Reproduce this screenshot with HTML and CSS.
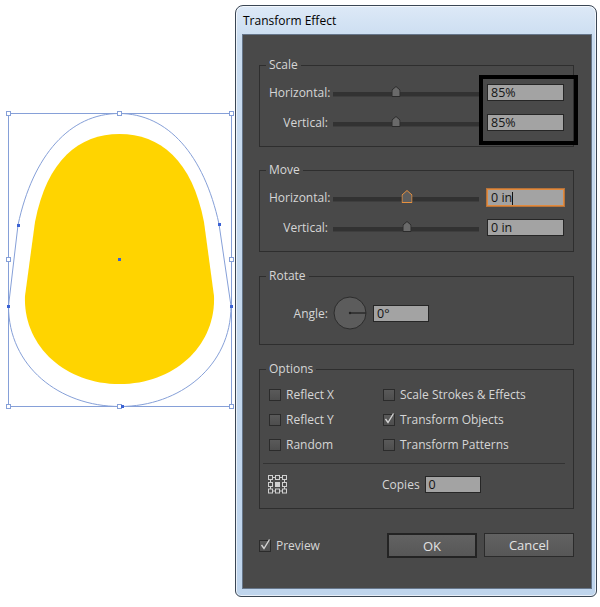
FILE: index.html
```html
<!DOCTYPE html>
<html>
<head>
<meta charset="utf-8">
<link rel="stylesheet" href="styles.css">
</head>
<body>
<svg class="canvas" width="235" height="607" viewBox="0 0 235 607">
  <path class="blob" d="M119.5,134 C160,134 192,160 204,222 L214,296 C216,345 175,384 119.5,384 C64,384 23,345 25,296 L35,222 C47,160 79,134 119.5,134 Z"/>
  <rect class="bbox" x="8.5" y="113.5" width="223" height="293"/>
  <path class="outline" d="M119,113.5 C168,113.5 204,155 219,224 L231,306 C231,366 180,406.5 120,406.5 C59,406.5 8.5,366 8.5,306 L18,225 C33,155 70,113.5 119,113.5 Z"/>
  <g class="handle">
    <rect x="6.5" y="111.5" width="4" height="4"/>
    <rect x="117.5" y="111.5" width="4" height="4"/>
    <rect x="229.5" y="111.5" width="4" height="4"/>
    <rect x="6.5" y="257.5" width="4" height="4"/>
    <rect x="229.5" y="257.5" width="4" height="4"/>
    <rect x="6.5" y="404.5" width="4" height="4"/>
    <rect x="117.5" y="404.5" width="4" height="4"/>
    <rect x="229.5" y="404.5" width="4" height="4"/>
  </g>
  <g class="anchor">
    <rect x="17" y="224" width="3" height="3"/>
    <rect x="218" y="223" width="3" height="3"/>
    <rect x="7" y="305" width="3" height="3"/>
    <rect x="230" y="305" width="3" height="3"/>
    <rect x="118" y="258" width="3" height="3"/>
    <rect x="121" y="405" width="3" height="3"/>
  </g>
</svg>

<div class="window">
  <div class="titlebar">Transform Effect</div>
  <div class="panel">
    <fieldset class="group scale">
      <legend>Scale</legend>
      <div class="row">
        <span class="label">Horizontal:</span>
        <div class="slider"><svg class="thumb" style="left:43%" width="9" height="11" viewBox="0 0 9 11"><path d="M0.5,10.5 V4 L4.5,0.5 L8.5,4 V10.5 Z"/></svg></div>
        <div class="field">85%</div>
      </div>
      <div class="row">
        <span class="label">Vertical:</span>
        <div class="slider"><svg class="thumb" style="left:43%" width="9" height="11" viewBox="0 0 9 11"><path d="M0.5,10.5 V4 L4.5,0.5 L8.5,4 V10.5 Z"/></svg></div>
        <div class="field">85%</div>
      </div>
    </fieldset>

    <fieldset class="group move">
      <legend>Move</legend>
      <div class="row">
        <span class="label">Horizontal:</span>
        <div class="slider"><svg class="thumb active" style="left:50.5%" width="11" height="13" viewBox="0 0 11 13"><path d="M0.5,12.5 V5 L5.5,0.5 L10.5,5 V12.5 Z"/></svg></div>
        <div class="field focus">0 in<span class="caret"></span></div>
      </div>
      <div class="row">
        <span class="label">Vertical:</span>
        <div class="slider"><svg class="thumb" style="left:50.5%" width="9" height="11" viewBox="0 0 9 11"><path d="M0.5,10.5 V4 L4.5,0.5 L8.5,4 V10.5 Z"/></svg></div>
        <div class="field">0 in</div>
      </div>
    </fieldset>

    <fieldset class="group rotate">
      <legend>Rotate</legend>
      <div class="row dial-row">
        <span class="label">Angle:</span>
        <svg class="dial" width="34" height="34" viewBox="0 0 34 34">
          <circle cx="17" cy="17" r="16" class="dial-face"/>
          <line x1="17" y1="17" x2="33" y2="17" class="dial-hand"/>
          <circle cx="17" cy="17" r="1.2" class="dial-dot"/>
        </svg>
        <div class="field angle">0°</div>
      </div>
    </fieldset>

    <fieldset class="group options">
      <legend>Options</legend>
      <div class="checks">
        <label class="check"><span class="box"></span>Reflect X</label>
        <label class="check"><span class="box"></span>Scale Strokes &amp; Effects</label>
        <label class="check"><span class="box"></span>Reflect Y</label>
        <label class="check"><span class="box"><svg width="12" height="12" viewBox="0 0 12 12"><path d="M2.5,6 L5,9.5 L10.5,0.5"/></svg></span>Transform Objects</label>
        <label class="check"><span class="box"></span>Random</label>
        <label class="check"><span class="box"></span>Transform Patterns</label>
      </div>
      <div class="separator"></div>
      <div class="copies-row">
        <svg class="locator" width="20" height="19" viewBox="0 0 20 19">
          <g class="loc-sq">
            <rect x="0.5" y="0.5" width="4" height="4"/>
            <rect x="7.5" y="0.5" width="4" height="4"/>
            <rect x="14.5" y="0.5" width="4" height="4"/>
            <rect x="0.5" y="7.5" width="4" height="4"/>
            <rect x="14.5" y="7.5" width="4" height="4"/>
            <rect x="0.5" y="14" width="4" height="4"/>
            <rect x="7.5" y="14" width="4" height="4"/>
            <rect x="14.5" y="14" width="4" height="4"/>
          </g>
          <rect class="loc-center" x="7" y="7" width="5" height="5"/>
          <g class="loc-line">
            <line x1="4.5" y1="2.5" x2="7.5" y2="2.5"/>
            <line x1="11.5" y1="2.5" x2="14.5" y2="2.5"/>
            <line x1="4.5" y1="16" x2="7.5" y2="16"/>
            <line x1="11.5" y1="16" x2="14.5" y2="16"/>
            <line x1="2.5" y1="4.5" x2="2.5" y2="7.5"/>
            <line x1="2.5" y1="11.5" x2="2.5" y2="14"/>
            <line x1="16.5" y1="4.5" x2="16.5" y2="7.5"/>
            <line x1="16.5" y1="11.5" x2="16.5" y2="14"/>
          </g>
        </svg>
        <span class="copies-label">Copies</span>
        <div class="field copies">0</div>
      </div>
    </fieldset>

    <div class="footer">
      <label class="check preview"><span class="box"><svg width="12" height="12" viewBox="0 0 12 12"><path d="M2.5,6 L5,9.5 L10.5,0.5"/></svg></span>Preview</label>
      <div class="buttons">
        <button class="btn default">OK</button>
        <button class="btn">Cancel</button>
      </div>
    </div>

    <div class="highlight"></div>
  </div>
</div>
</body>
</html>
```

FILE: styles.css
```css
body {
  margin: 0;
  background: #ffffff;
  display: flex;
  align-items: flex-start;
  font-family: "Open Sans", "Noto Sans", sans-serif;
  font-size: 12px;
}

/* ---------- artboard ---------- */
.canvas { display: block; flex: none; }
.blob { fill: #ffd400; }
.bbox, .outline { fill: none; stroke: #86a0d8; stroke-width: 1; }
.handle rect { fill: #ffffff; stroke: #86a0d8; stroke-width: 1; }
.anchor rect { fill: #3b62d4; }

/* ---------- window ---------- */
.window {
  box-sizing: border-box;
  flex: none;
  width: 362px;
  height: 592px;
  margin-top: 5px;
  border: 1px solid #3a4654;
  border-radius: 8px 8px 6px 6px;
  background: linear-gradient(180deg, #dde9f7 0%, #c9dcf0 6%, #bfd5ed 100%);
  box-shadow: inset 0 0 0 1px rgba(255, 255, 255, 0.65);
  padding: 0 4px 7px 6px;
  display: flex;
  flex-direction: column;
}
.titlebar {
  height: 28px;
  line-height: 29px;
  padding-left: 1px;
  color: #000;
  font-size: 12px;
}
.panel {
  flex: 1;
  position: relative;
  background: #494949;
  border: 1px solid #66768a;
  padding: 0 17px 0 16px;
  color: #d6d6d6;
}

/* ---------- group boxes ---------- */
.group {
  margin: 0;
  padding: 0;
  min-width: 0;
  border: 1px solid #2e2e2e;
}
.group legend {
  margin-left: 6px;
  padding: 0 3px;
  line-height: 16px;
  color: #d6d6d6;
}
.scale { margin-top: 22px; padding: 11px 0 15px; }
.move { margin-top: 15px; padding: 11px 0 15px; }
.rotate { margin-top: 16px; padding: 12px 0 14px; }
.options { margin-top: 16px; padding: 9px 0 15px; }

.row {
  display: flex;
  align-items: center;
  height: 17px;
  padding-left: 9px;
}
.row + .row { margin-top: 13px; }
.label {
  width: 59px;
  text-align: right;
  white-space: nowrap;
}

.slider {
  position: relative;
  width: 146px;
  height: 4px;
  margin: 3px 0 0 5px;
  background: #323232;
  box-shadow: 0 1px 0 #3e3e3e;
}
.thumb {
  position: absolute;
  bottom: -1px;
  transform: translateX(-50%);
}
.thumb path { fill: #6a6a6a; stroke: #2b2b2b; stroke-width: 1; }
.thumb.active { bottom: -2px; }
.thumb.active path { fill: #5e5e5e; stroke: #e8913f; }

.field {
  box-sizing: border-box;
  width: 77px;
  height: 17px;
  margin-left: 8px;
  padding-left: 3px;
  border: 1px solid #262626;
  background: #a3a3a3;
  color: #141414;
  font-size: 12.5px;
  line-height: 15px;
  white-space: nowrap;
}
.field.focus {
  border-color: #e08a3e;
  box-shadow: 0 0 0 1px #b7733a;
}
.caret {
  display: inline-block;
  width: 0;
  height: 13px;
  border-left: 1px solid #111;
  vertical-align: -3px;
}

.dial-row { height: 34px; }
.dial { margin-left: 5px; display: block; }
.dial-face { fill: #5c5c5c; stroke: #2c2c2c; stroke-width: 1; }
.dial-hand { stroke: #2a2a2a; stroke-width: 1.5; }
.dial-dot { fill: #222; }
.field.angle { width: 56px; margin-left: 6px; }

/* ---------- options ---------- */
.checks {
  display: grid;
  grid-template-columns: 114px auto;
  grid-auto-rows: 17px;
  row-gap: 8px;
  padding-left: 9px;
}
.check {
  display: flex;
  align-items: center;
  gap: 5px;
  white-space: nowrap;
}
.box {
  position: relative;
  box-sizing: border-box;
  width: 12px;
  height: 12px;
  flex: none;
  border: 1px solid #2b2b2b;
  background: linear-gradient(180deg, #5a5a5a, #4e4e4e);
}
.box svg {
  position: absolute;
  left: -1px;
  top: -2px;
}
.box path { fill: none; stroke: #d4d4d4; stroke-width: 1.4; }

.separator {
  margin: 10px 8px 0 3px;
  border-top: 1px solid #333333;
}
.copies-row {
  display: flex;
  align-items: center;
  height: 17px;
  margin-top: 12px;
  padding-left: 8px;
}
.locator { display: block; }
.loc-sq rect { fill: none; stroke: #cfcfcf; stroke-width: 1; }
.loc-center { fill: #cfcfcf; }
.loc-line line { stroke: #cfcfcf; stroke-width: 1; }
.copies-label { margin-left: 94px; }
.field.copies { width: 56px; margin-left: 5px; }

/* ---------- footer ---------- */
.footer {
  display: flex;
  align-items: center;
  margin-top: 24px;
}
.preview { gap: 5px; }
.buttons {
  margin-left: auto;
  display: flex;
  align-items: flex-start;
  gap: 7px;
}
.btn {
  box-sizing: border-box;
  width: 90px;
  height: 24px;
  margin: 0;
  padding: 0;
  border: 1px solid #2b2b2b;
  background: linear-gradient(180deg, #626262, #575757);
  color: #e2e2e2;
  font-family: "Open Sans", "Noto Sans", sans-serif;
  font-size: 13px;
}
.btn.default {
  height: 25px;
  border: 2px solid #232323;
}

/* ---------- annotation ---------- */
.highlight {
  position: absolute;
  left: 236px;
  top: 40px;
  box-sizing: border-box;
  width: 99px;
  height: 70px;
  border: 4px solid #000;
}
```
